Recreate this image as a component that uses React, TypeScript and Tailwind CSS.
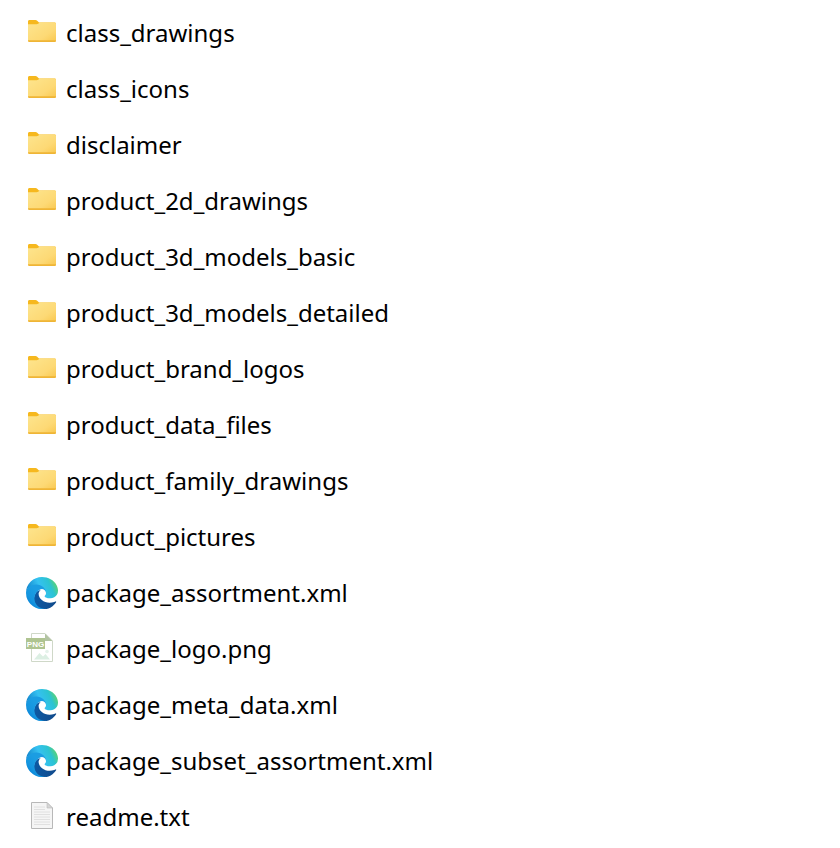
const folders = [
  "class_drawings",
  "class_icons",
  "disclaimer",
  "product_2d_drawings",
  "product_3d_models_basic",
  "product_3d_models_detailed",
  "product_brand_logos",
  "product_data_files",
  "product_family_drawings",
  "product_pictures",
];

const FolderIcon = () => (
  <svg width="28" height="22" viewBox="0 0 28 22" className="ml-[2px] mb-[4px]">
    <defs>
      <linearGradient id="folderFront" x1="0" y1="0" x2="1" y2="1">
        <stop offset="0" stopColor="#fde58e" />
        <stop offset="0.65" stopColor="#fdd975" />
        <stop offset="1" stopColor="#f9c74e" />
      </linearGradient>
    </defs>
    <path d="M0 1.5C0 .6.6 0 1.5 0H7.5C8.2 0 8.7.2 9.2.7L11 2.5H26.5C27.4 2.5 28 3.1 28 4V9H0Z" fill="#f6b81e" />
    <path d="M0 4.2H8.5C9.3 4.2 9.9 4 10.5 3.5L11.8 2.6H26.5C27.4 2.6 28 3.2 28 4.1V20.5C28 21.4 27.4 22 26.5 22H1.5C.6 22 0 21.4 0 20.5Z" fill="url(#folderFront)" />
    <path d="M0 20.5C0 21.4.6 22 1.5 22H26.5C27.4 22 28 21.4 28 20.5V20.2H0Z" fill="#efb536" />
  </svg>
);

const EdgeIcon = () => (
  <svg width="32" height="32" viewBox="0 0 256 256" className="mb-[1px]">
    <defs>
      <linearGradient id="edgeWave" x1="0" y1="0.7" x2="1" y2="0.7">
        <stop offset="0" stopColor="#0c59a4" />
        <stop offset="1" stopColor="#114a8b" />
      </linearGradient>
      <linearGradient id="edgeLeft" x1="0.6" y1="0.4" x2="0.1" y2="1">
        <stop offset="0" stopColor="#1b9de2" />
        <stop offset="0.5" stopColor="#1595df" />
        <stop offset="1" stopColor="#0078d4" />
      </linearGradient>
      <linearGradient id="edgeTop" x1="0" y1="0.6" x2="1" y2="0.3">
        <stop offset="0" stopColor="#0f7fc9" />
        <stop offset="0.45" stopColor="#35c1f1" />
        <stop offset="0.75" stopColor="#2bc3d2" />
        <stop offset="1" stopColor="#66d65f" />
      </linearGradient>
    </defs>
    <path
      d="M235.7 195.5a93.7 93.7 0 0 1-10.6 4.7 101.9 101.9 0 0 1-35.9 6.4c-47.3 0-88.5-32.5-88.5-74.3a31.5 31.5 0 0 1 16.4-27.3c-42.8 1.8-53.8 46.4-53.8 72.5 0 73.9 68.1 81.4 82.8 81.4 7.9 0 19.8-2.3 27-4.6l1.3-.4a128.3 128.3 0 0 0 66.6-52.8 4 4 0 0 0-5.3-5.6z"
      fill="url(#edgeWave)"
    />
    <path
      d="M105.7 241.4a79.2 79.2 0 0 1-22.7-21.3 80.7 80.7 0 0 1 29.5-120c3.2-1.5 8.5-4.1 15.6-4a32.4 32.4 0 0 1 25.7 13 31.9 31.9 0 0 1 6.3 18.7c0-.2 24.5-79.6-80-79.6-43.9 0-80 41.6-80 78.2a130.2 130.2 0 0 0 12.1 56 128 128 0 0 0 156.4 67 75.5 75.5 0 0 1-63-8z"
      fill="url(#edgeLeft)"
    />
    <path
      d="M152.3 148.8c-.8 1-3.3 2.5-3.3 5.7 0 2.6 1.7 5.1 4.8 7.2 14.4 10 41.5 8.7 41.6 8.7a59.6 59.6 0 0 0 30.3-8.4A61.4 61.4 0 0 0 256 109.3c.3-22.4-8-37.3-11.3-43.9C223.5 24 177.7 0 128 0A128 128 0 0 0 0 126.2c.5-36.5 36.8-66 80-66 3.5 0 23.5.3 42 10a72.6 72.6 0 0 1 30.9 29.3c6.1 10.6 7.2 24.1 7.2 29.5s-2.7 13.3-7.8 19.9z"
      fill="url(#edgeTop)"
    />
  </svg>
);

const PngIcon = () => (
  <svg width="27" height="29" viewBox="0 0 27 29" className="mb-[3px]">
    <path d="M5.5 .5H19L26.5 8V28.5H5.5Z" fill="#ffffff" stroke="#cfd8c8" />
    <path d="M19 .5V8H26.5Z" fill="#b3c4a3" />
    <rect x="0" y="5" width="19" height="11" fill="#afc491" />
    <text x="9.5" y="13.6" textAnchor="middle" fontSize="8" fontWeight="700" fill="#ffffff" fontFamily="Liberation Sans, sans-serif">
      PNG
    </text>
    <path d="M8 26.5L13.5 20L17 23.5L19.5 21L24 26.5Z" fill="#dcefe3" />
    <circle cx="21" cy="18.5" r="1.8" fill="#e5f2ea" />
  </svg>
);

const TextIcon = () => (
  <svg width="22" height="27" viewBox="0 0 22 27" className="ml-[5px] mb-[3px]">
    <path d="M.5 .5H16L21.5 6V26.5H.5Z" fill="#f5f5f5" stroke="#b8b8b8" />
    <path d="M16 .5V6H21.5Z" fill="#d6d6d6" stroke="#b8b8b8" strokeWidth="0.6" />
    <path
      d="M3 5H14M3 7.5H14M3 10H19M3 12.5H19M3 15H19M3 17.5H19M3 20H19M3 22.5H19"
      stroke="#e0e0e0"
      strokeWidth="1"
    />
  </svg>
);

const Row = ({ icon, name }: { icon: React.ReactNode; name: string }) => (
  <div className="flex items-center h-14">
    <div className="w-[66px] shrink-0 flex items-center pl-[26px]">{icon}</div>
    <span className="text-[24px] text-black leading-none">{name}</span>
  </div>
);

const App = () => {
  return (
    <div className="w-[840px] h-[848px] bg-white pt-[5px] overflow-hidden font-['Noto_Sans',sans-serif]">
      {folders.map((f) => (
        <Row key={f} icon={<FolderIcon />} name={f} />
      ))}
      <Row icon={<EdgeIcon />} name="package_assortment.xml" />
      <Row icon={<PngIcon />} name="package_logo.png" />
      <Row icon={<EdgeIcon />} name="package_meta_data.xml" />
      <Row icon={<EdgeIcon />} name="package_subset_assortment.xml" />
      <Row icon={<TextIcon />} name="readme.txt" />
    </div>
  );
};

export default App;
